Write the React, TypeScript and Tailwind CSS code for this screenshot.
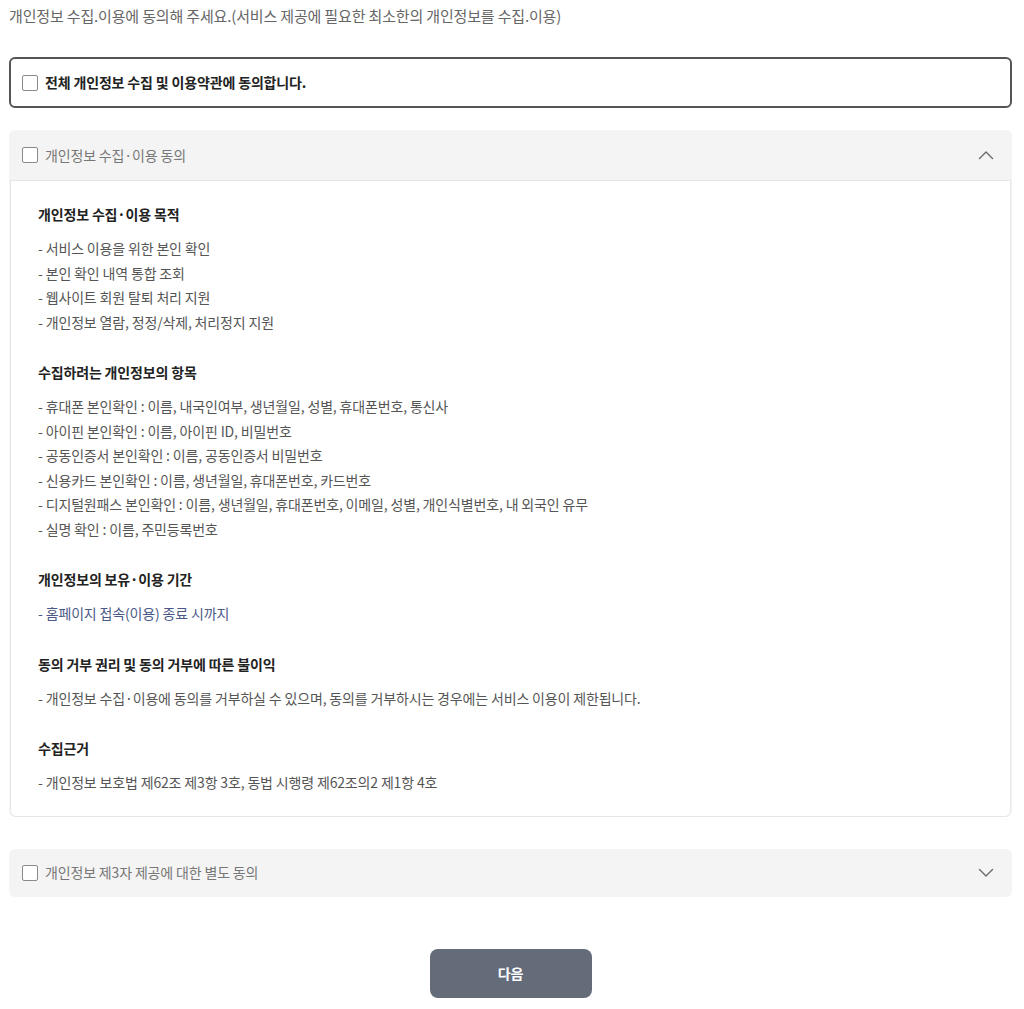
import { useState } from "react";

const FONT = "font-['Noto_Sans_CJK_KR','Noto_Sans',sans-serif]";

type Section = {
  heading: string;
  points: string[];
  tone?: "link";
};

const PRIVACY_SECTIONS: Section[] = [
  {
    heading: "개인정보 수집·이용 목적",
    points: [
      "서비스 이용을 위한 본인 확인",
      "본인 확인 내역 통합 조회",
      "웹사이트 회원 탈퇴 처리 지원",
      "개인정보 열람, 정정/삭제, 처리정지 지원",
    ],
  },
  {
    heading: "수집하려는 개인정보의 항목",
    points: [
      "휴대폰 본인확인 : 이름, 내국인여부, 생년월일, 성별, 휴대폰번호, 통신사",
      "아이핀 본인확인 : 이름, 아이핀 ID, 비밀번호",
      "공동인증서 본인확인 : 이름, 공동인증서 비밀번호",
      "신용카드 본인확인 : 이름, 생년월일, 휴대폰번호, 카드번호",
      "디지털원패스 본인확인 : 이름, 생년월일, 휴대폰번호, 이메일, 성별, 개인식별번호, 내 외국인 유무",
      "실명 확인 : 이름, 주민등록번호",
    ],
  },
  {
    heading: "개인정보의 보유·이용 기간",
    points: ["홈페이지 접속(이용) 종료 시까지"],
    tone: "link",
  },
  {
    heading: "동의 거부 권리 및 동의 거부에 따른 불이익",
    points: ["개인정보 수집·이용에 동의를 거부하실 수 있으며, 동의를 거부하시는 경우에는 서비스 이용이 제한됩니다."],
  },
  {
    heading: "수집근거",
    points: ["개인정보 보호법 제62조 제3항 3호, 동법 시행령 제62조의2 제1항 4호"],
  },
];

function Checkbox({ checked, onChange }: { checked: boolean; onChange: (v: boolean) => void }) {
  return (
    <input
      type="checkbox"
      checked={checked}
      onChange={(event) => onChange(event.target.checked)}
      className="h-4 w-4 shrink-0 appearance-none rounded-[2px] border-[1.5px] border-[#8a8a8a] bg-white checked:border-[#646c7a] checked:bg-[#646c7a]"
    />
  );
}

function Chevron({ up }: { up: boolean }) {
  return (
    <svg width="16" height="10" viewBox="0 0 16 10" fill="none" className="shrink-0">
      <polyline
        points={up ? "1.5,8.5 8,2 14.5,8.5" : "1.5,1.5 8,8 14.5,1.5"}
        stroke="#6b6b6b"
        strokeWidth="1.4"
        strokeLinecap="round"
        strokeLinejoin="round"
      />
    </svg>
  );
}

export default function App() {
  const [allChecked, setAllChecked] = useState(false);
  const [collectChecked, setCollectChecked] = useState(false);
  const [thirdChecked, setThirdChecked] = useState(false);
  const [collectOpen, setCollectOpen] = useState(true);
  const [thirdOpen, setThirdOpen] = useState(false);

  const toggleAll = (value: boolean) => {
    setAllChecked(value);
    setCollectChecked(value);
    setThirdChecked(value);
  };

  return (
    <div className={`${FONT} min-h-[1009px] bg-white pl-[9px] pr-[12px] pt-[4px] tracking-[-0.01em]`}>
      <p className="text-[15px] leading-6 text-[#666]">
        개인정보 수집.이용에 동의해 주세요.(서비스 제공에 필요한 최소한의 개인정보를 수집.이용)
      </p>

      <label className="mt-[29px] flex h-[51px] cursor-pointer items-center gap-[7px] rounded-[6px] border-2 border-[#555] px-[11px]">
        <Checkbox checked={allChecked} onChange={toggleAll} />
        <span className="text-[14px] font-bold text-[#222]">전체 개인정보 수집 및 이용약관에 동의합니다.</span>
      </label>

      <div className="mt-[22px] rounded-[6px] bg-[#f4f4f4]">
        <div className="flex h-[50px] items-center pl-[13px] pr-[10px]">
          <label className="flex flex-1 cursor-pointer items-center gap-[7px]">
            <Checkbox checked={collectChecked} onChange={setCollectChecked} />
            <span className="text-[14px] text-[#777]">개인정보 수집·이용 동의</span>
          </label>
          <button type="button" onClick={() => setCollectOpen(!collectOpen)} className="px-2 py-2">
            <Chevron up={collectOpen} />
          </button>
        </div>

        {collectOpen && (
          <div className="mx-px rounded-b-[6px] border border-[#e6e6e6] bg-white px-[27px] py-[21px]">
            <div className="flex flex-col gap-[26px]">
              {PRIVACY_SECTIONS.map((section) => (
                <section key={section.heading}>
                  <h4 className="mb-[10px] text-[14px] font-bold leading-6 text-[#222]">{section.heading}</h4>
                  <ul className={`text-[14px] leading-[24.5px] ${section.tone === "link" ? "text-[#4a5987]" : "text-[#555]"}`}>
                    {section.points.map((point) => (
                      <li key={point}>- {point}</li>
                    ))}
                  </ul>
                </section>
              ))}
            </div>
          </div>
        )}
      </div>

      <div className="mt-[32px] rounded-[6px] bg-[#f4f4f4]">
        <div className="flex h-[48px] items-center pl-[13px] pr-[10px]">
          <label className="flex flex-1 cursor-pointer items-center gap-[7px]">
            <Checkbox checked={thirdChecked} onChange={setThirdChecked} />
            <span className="text-[14px] text-[#777]">개인정보 제3자 제공에 대한 별도 동의</span>
          </label>
          <button type="button" onClick={() => setThirdOpen(!thirdOpen)} className="px-2 py-2">
            <Chevron up={thirdOpen} />
          </button>
        </div>
      </div>

      <div className="mt-[52px] flex justify-center">
        <button
          type="button"
          className="h-[49px] w-[162px] rounded-[8px] bg-[#646c7a] text-[14px] font-bold text-white"
        >
          다음
        </button>
      </div>
    </div>
  );
}
